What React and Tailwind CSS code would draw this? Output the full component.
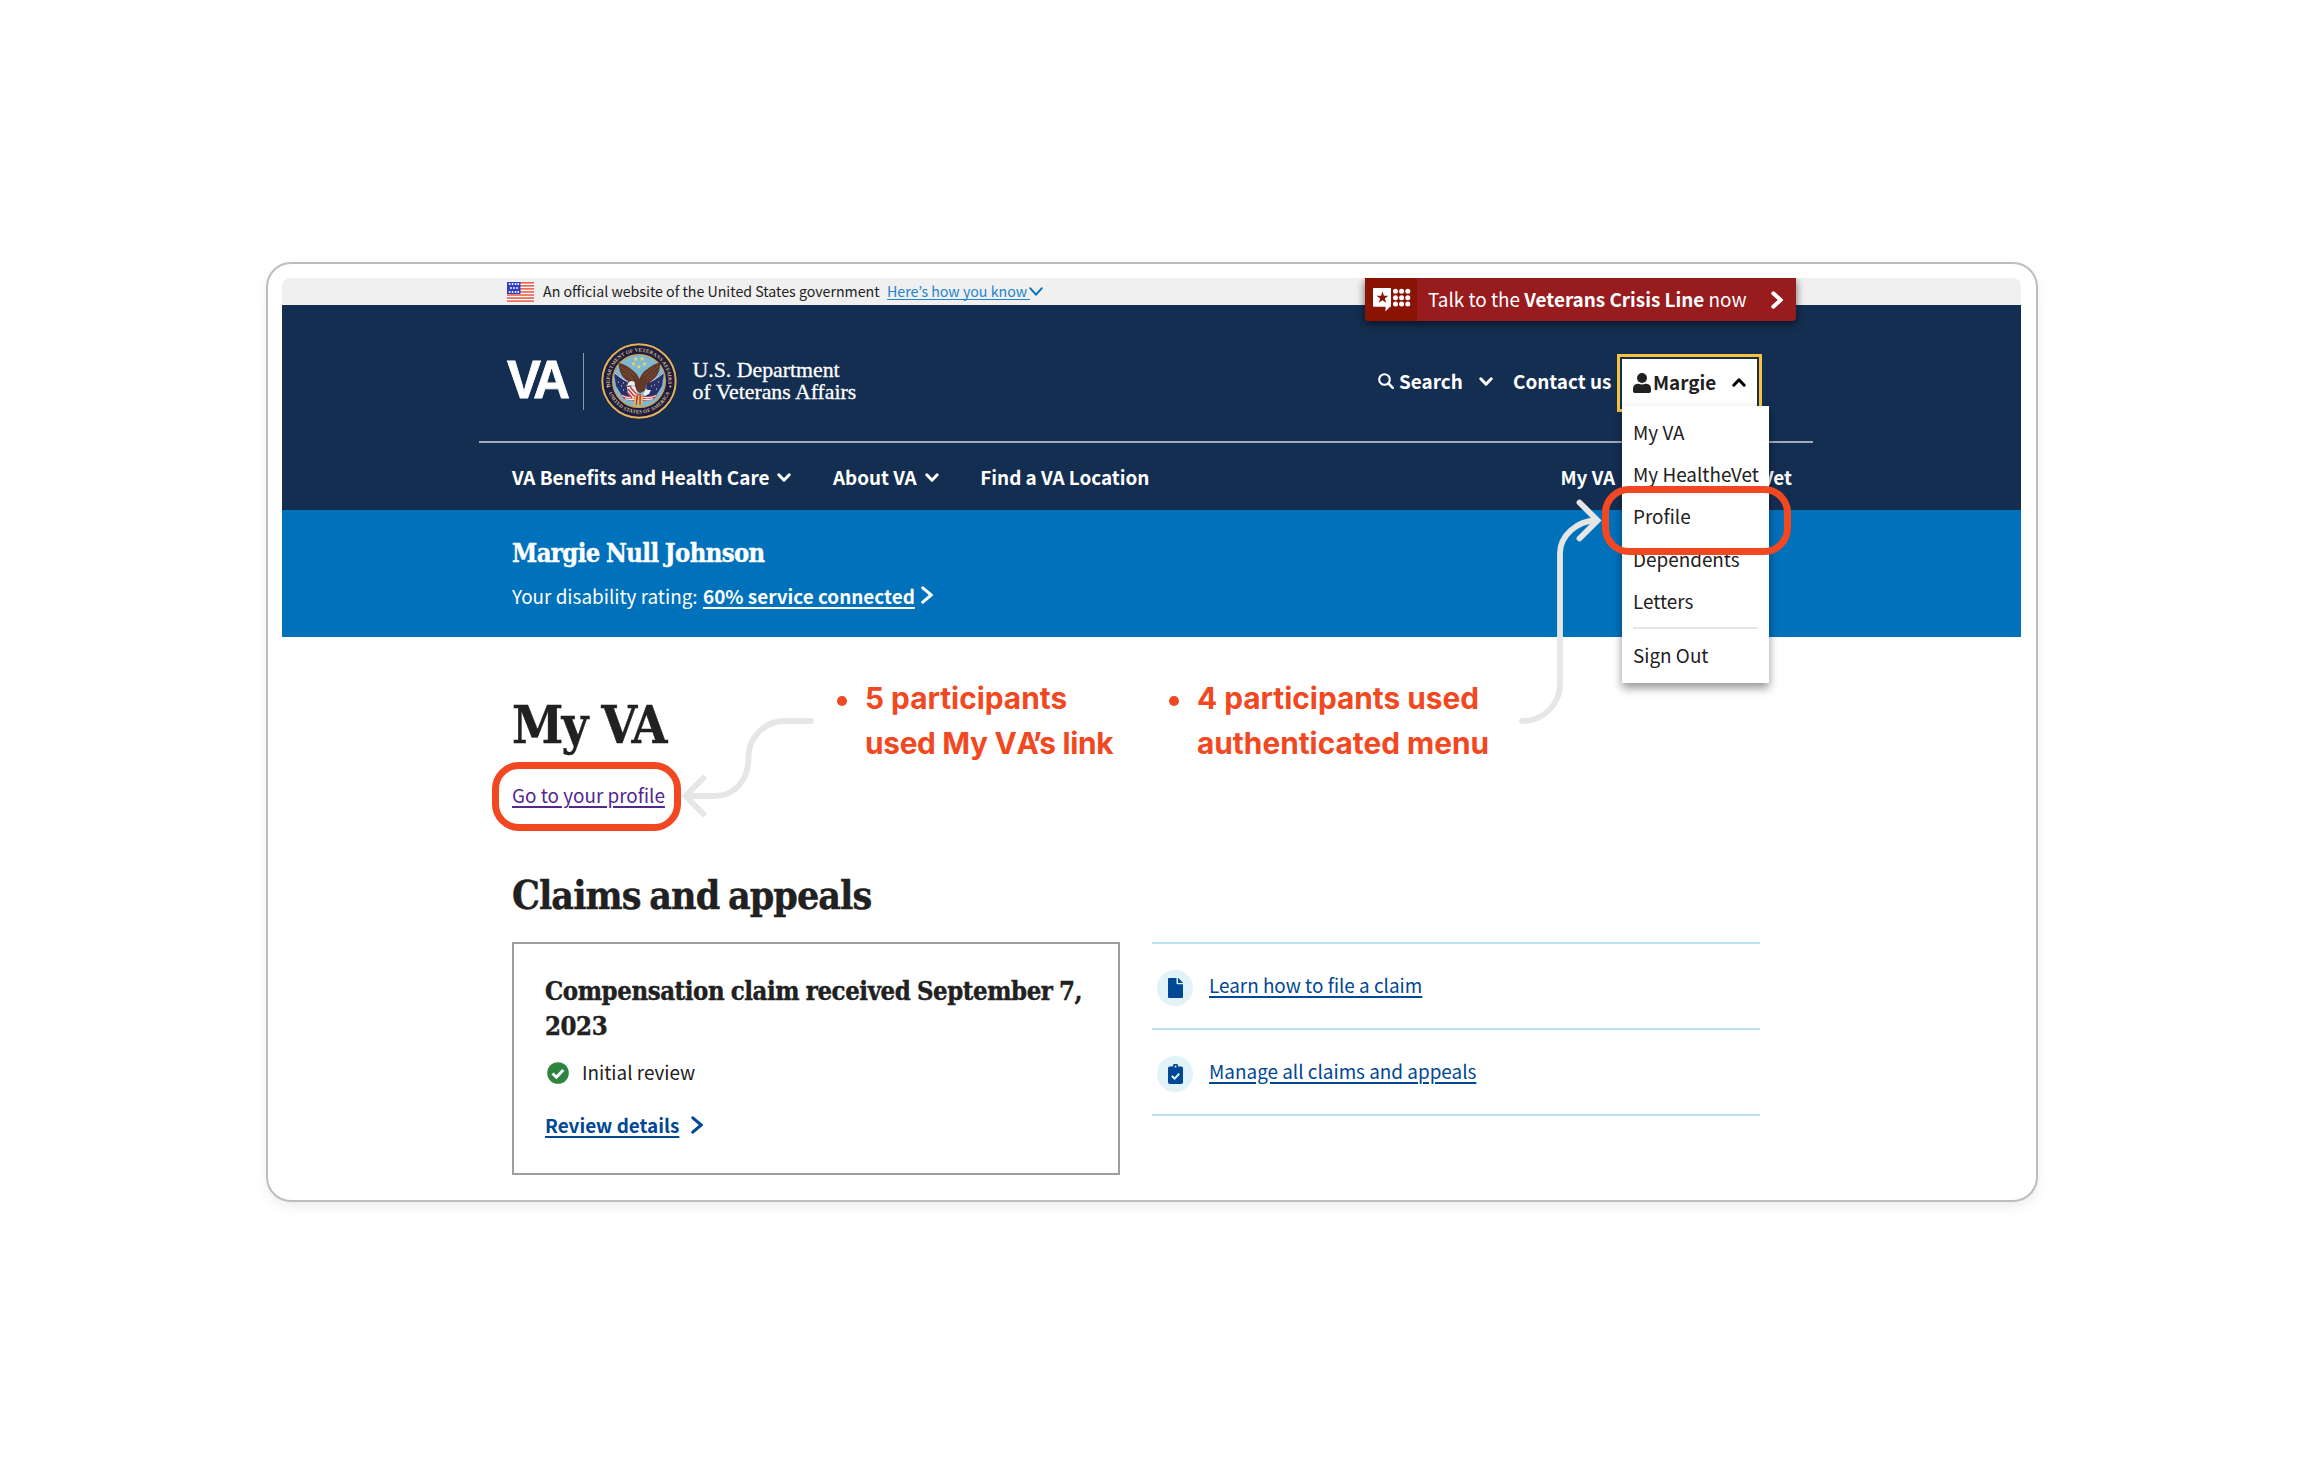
import React from "react";

function Chevron({ dir = "down", className = "", w = 14, h = 9, stroke = 3 }) {
  const vertical = dir === "down" || dir === "up";
  const i = stroke / 2 + 0.3;
  const d =
    dir === "down"
      ? `M${i} ${i} L${w / 2} ${h - i} L${w - i} ${i}`
      : dir === "up"
      ? `M${i} ${h - i} L${w / 2} ${i} L${w - i} ${h - i}`
      : `M${i} ${i} L${w - i} ${h / 2} L${i} ${h - i}`;
  return (
    <svg width={w} height={h} viewBox={`0 0 ${w} ${h}`} className={`shrink-0 ${className}`} fill="none" stroke="currentColor" strokeWidth={stroke} strokeLinecap="round" strokeLinejoin={vertical ? "round" : "miter"}>
      <path d={d} />
    </svg>
  );
}

function Flag() {
  return (
    <svg width="27" height="20" viewBox="0 0 27 20" className="shrink-0">
      <rect width="27" height="20" fill="#fff" />
      {[0, 1, 2, 3, 4, 5, 6].map((i) => (
        <rect key={i} x="0" y={i * 3.05} width="27" height="1.6" fill="#e8604c" />
      ))}
      <rect width="13.5" height="12" fill="#2f3fc4" />
      {[2, 6, 10].map((y, r) =>
        [2.6, 5.6, 8.6, 11.2].slice(0, r === 1 ? 3 : 4).map((x) => (
          <circle key={`${x}-${y}`} cx={r === 1 ? x + 1.4 : x} cy={y} r="0.95" fill="#fff" />
        ))
      )}
    </svg>
  );
}

function Seal() {
  return (
    <svg width="78" height="78" viewBox="-39 -39 78 78" className="shrink-0">
      <defs>
        <path id="sealTop" d="M-28.3 7 A29.2 29.2 0 1 1 28.3 7" />
        <path id="sealBottom" d="M-32.2 5 A32.6 32.6 0 0 0 32.2 5" />
        <clipPath id="sky"><circle r="25.6" /></clipPath>
      </defs>
      <circle r="38.4" fill="#1f1c3f" />
      <circle r="36.7" fill="none" stroke="#dcb45c" strokeWidth="2" />
      <circle r="26.4" fill="#7fb6d0" stroke="#c9a455" strokeWidth="1.3" />
      <text fill="#cdb988" fontSize="5.2" fontWeight="700" fontFamily="Liberation Serif, serif">
        <textPath href="#sealTop" startOffset="1" textLength="101">DEPARTMENT OF VETERANS AFFAIRS</textPath>
      </text>
      <text fill="#cdb988" fontSize="5.2" fontWeight="700" fontFamily="Liberation Serif, serif">
        <textPath href="#sealBottom" startOffset="7" textLength="78">UNITED STATES OF AMERICA</textPath>
      </text>
      <circle cx="-31.3" cy="5.5" r="1" fill="#e6cf92" />
      <circle cx="31.3" cy="5.5" r="1" fill="#e6cf92" />
      <g clipPath="url(#sky)">
        <path d="M-25 -8 L-22 -7 Q-16 -1 -8 1 L-6 17 Q-14 17 -18 13 L-23 5Z" fill="#2a3068" />
        <path d="M25 -8 L22 -7 Q16 -1 8 1 L6 17 Q14 17 18 13 L23 5Z" fill="#2a3068" />
        <path d="M-24.5 -8 Q-17 -2 -11 1M24.5 -8 Q17 -2 11 1" stroke="#e8eef5" strokeWidth="1" fill="none" />
        <path d="M-21 1h1M-18 5h1M-16 2h1M-16 9h1M19 1h1M15 4h1M17 8h1M12 5h1" stroke="#dfe6f2" strokeWidth="1.1" />
        <path d="M-19 13 Q-10 18 0 13 Q10 18 19 13 L15 18 Q8 21 0 19 Q-8 21 -15 18Z" fill="#c23b43" />
        <path d="M-17 14.5 Q-9 18 -3 16M17 14.5 Q9 18 3 16M-14 17.5 Q-8 19.5 -3 18M14 17.5 Q8 19.5 3 18" stroke="#f0e6e2" strokeWidth="1.3" fill="none" />
      </g>
      <g fill="#f3da58">
        {[[-3.2, -22], [3, -22], [-5.4, -17], [5.4, -17], [0, -14.2]].map(([x, y]) => (
          <path key={`${x}${y}`} transform={`translate(${x} ${y})`} d="M0-2.4 .6-.8 2.3-.8 .9.3 1.5 2 0 1-1.5 2-.9.3-2.3-.8-.6-.8Z" />
        ))}
      </g>
      <path d="M-20.5 -18 Q-14 -17 -8 -12 Q-2 -8 0.5 -2 Q3 -9 9 -12.5 Q15 -17 21 -19 Q21.5 -12 18.5 -6.5 Q15 -1 8 3 Q6.5 7 5.5 10 L1 12 L-3.5 9 L-5 2 Q-12 1 -16 -4 Q-20 -9 -20.5 -18Z" fill="#63392a" />
      <path d="M-18 -14 L-6 -3 M-16 -8 L-6 -1 M-13 -13 L-3 -4 M19 -15 L7 -2 M17 -8 L8 0 M14 -14 L5 -5" stroke="#7d4f36" strokeWidth="1" />
      <path d="M-11 2 Q-8 -1.5 -4.5 1 L-4 4.5 L-9 4.5 L-11.5 5Z" fill="#f2efe9" />
      <path d="M-11.5 3 l-2 2.5 2.5 -.6z" fill="#e9b93b" />
      <path d="M-12 6 L-4 5 L-1 14 L-6 18 L-11 13Z" fill="#f3ecea" />
      <path d="M-11 8 L-4 16 M-9 6 L-2.5 13 M-11 12 L-7 17" stroke="#c23b43" strokeWidth="1.5" />
      <path d="M4 13 L7 8 L9 9 L12 9 L10 13 L6 15Z" fill="#eef1f4" />
      <path d="M-3 14 L-4.5 25 M0 14 L-1 26 M2.5 13.5 L2.5 24" stroke="#dfb950" strokeWidth="2" />
      <path d="M-1.8 13 L-2.8 24 M1.2 13 L1 24" stroke="#b8323a" strokeWidth="1.1" />
    </svg>
  );
}

function CrisisIcon() {
  return (
    <svg width="38" height="24" viewBox="0 0 38 24" className="shrink-0">
      <path d="M.8 0H18V18.8H17L12.5 23.5V18.8H.8Q0 18.8 0 18V.8Q0 0 .8 0Z" fill="#fff" />
      <path d="M9.5 3.5 10.95 7.8 15.4 7.85 11.85 10.55 13.15 14.8 9.5 12.25 5.85 14.8 7.15 10.55 3.6 7.85 8.05 7.8Z" fill="#8b1303" />
      {[3.3, 9.7, 16].map((y) => [22.5, 28.6, 34.8].map((x) => <circle key={`${x}-${y}`} cx={x} cy={y} r="2.5" fill="#fff" />))}
    </svg>
  );
}

function SearchIcon() {
  return (
    <svg width="16" height="16" viewBox="0 0 16 16" className="shrink-0" fill="none" stroke="currentColor">
      <circle cx="6.5" cy="6.5" r="5.3" strokeWidth="2.1" />
      <path d="M10.5 10.5 14.8 14.8" strokeWidth="2.5" strokeLinecap="round" />
    </svg>
  );
}

function UserIcon() {
  return (
    <svg width="18" height="20" viewBox="0 0 18 20" className="shrink-0" fill="#212121">
      <circle cx="9" cy="5" r="5" />
      <path d="M4.8 10.8H5.5Q9 12.4 12.5 10.8H13.2Q18 11 18 16V18.2Q18 20 16.2 20H1.8Q0 20 0 18.2V16Q0 11 4.8 10.8Z" />
    </svg>
  );
}

function FileIcon() {
  return (
    <svg width="15" height="20" viewBox="0 0 15 20" fill="#004795">
      <path d="M1 0H8.5V5.3Q8.5 6.3 9.5 6.3H15V19Q15 20 14 20H1Q0 20 0 19V1Q0 0 1 0Z" />
      <path d="M10 0H10.3L15 4.8V5H10Z" />
    </svg>
  );
}

function ClipboardIcon() {
  return (
    <svg width="15" height="20" viewBox="0 0 15 20">
      <path d="M1.8 2.5H4.7A2.8 2.8 0 0 1 10.3 2.5H13.2Q15 2.5 15 4.3V18.2Q15 20 13.2 20H1.8Q0 20 0 18.2V4.3Q0 2.5 1.8 2.5Z" fill="#004795" />
      <circle cx="7.5" cy="2.6" r="1" fill="#e1f3f8" />
      <path d="M3.8 12 6.6 14.6 11.2 9.8" stroke="#e1f3f8" strokeWidth="2" fill="none" />
    </svg>
  );
}

const menuItems = ["My VA", "My HealtheVet", "Profile", "Dependents", "Letters"];

function UserMenu() {
  return (
    <div className="relative mt-[3px] h-[48px] w-[135px]">
      <button className="flex h-full w-full items-center bg-white pl-[11px] text-[#212121] outline-[3px] outline-offset-[2px] outline-[#fac23b]">
        <UserIcon />
        <span className="ml-[2px] w-[64px] pb-[2px] text-left leading-[30px]">Margie</span>
        <Chevron dir="up" className="ml-[15px] text-black" />
      </button>
      <ul className="absolute top-[47px] left-0 z-10 h-[277px] w-[147px] bg-white px-[11px] pt-[5.3px] font-normal whitespace-nowrap text-[#212121] shadow-[0_5px_9px_rgba(0,0,0,0.42)]">
        {menuItems.map((m) => (
          <li key={m} className="h-[42.3px] leading-[42.3px]">{m}</li>
        ))}
        <li className="mt-[5px] border-t-2 border-[#e6e6e6] pt-[5px] leading-[42px]">Sign Out</li>
      </ul>
    </div>
  );
}

function CrisisLine() {
  return (
    <div className="absolute top-0 left-[1083px] flex h-[43px] w-[431px] items-center overflow-visible rounded-b-[4px] bg-[#981b1e] text-white shadow-[0_3px_8px_rgba(0,0,0,0.6)] [clip-path:inset(0_-20px_-20px_-20px)]">
      <div className="flex h-full w-[52px] items-center rounded-bl-[4px] bg-[#8b1303] pt-px pl-[8px]">
        <CrisisIcon />
      </div>
      <div className="ml-[11px] w-[321px] pb-[1px] whitespace-nowrap">
        Talk to the <b className="font-bold">Veterans Crisis Line</b> now
      </div>
      <Chevron dir="right" w={12} h={18} stroke={4} className="ml-[22px]" />
    </div>
  );
}

function Header() {
  return (
    <header className="h-[205px] bg-[#142e51] text-white">
      <div className="ml-[197px] w-[1334px]">
        <div className="flex h-[138px] items-center border-b-2 border-[#a3abb8] pt-[16px] pl-[28px] font-bold">
          <span className="w-[64px] origin-left scale-x-[0.96] pb-[2px] font-['Liberation_Sans',sans-serif] text-[53px] leading-[60px] tracking-[-4px] [-webkit-text-stroke:0.8px_white]">VA</span>
          <span className="ml-[12px] h-[57px] w-px bg-[#8d99aa]" />
          <span className="ml-[16px]"><Seal /></span>
          <div className="ml-[14.5px] font-['Liberation_Serif',serif] text-[21.8px] leading-[22px] font-normal [-webkit-text-stroke:0.3px_white]">
            <div>U.S. Department</div>
            <div>of Veterans Affairs</div>
          </div>
          <div className="mr-[56px] ml-auto flex items-center leading-[30px]">
            <SearchIcon />
            <span className="ml-[5px] w-[63px]">Search</span>
            <Chevron className="ml-[17px]" />
            <span className="mr-[11px] ml-[20px] w-[98px] whitespace-nowrap">Contact us</span>
            <UserMenu />
          </div>
        </div>
        <nav className="flex h-[67px] items-center pt-px pr-[21px] pl-[33px] font-bold whitespace-nowrap">
          <span>VA Benefits and Health Care</span>
          <Chevron className="ml-[8px]" />
          <span className="ml-[41.5px]">About VA</span>
          <Chevron className="ml-[8px]" />
          <span className="ml-[41.5px]">Find a VA Location</span>
          <span className="mr-[43px] ml-auto">My VA</span>
          <span>My HealtheVet</span>
        </nav>
      </div>
    </header>
  );
}

const serif = "font-['DejaVu_Serif_Condensed','DejaVu_Serif',serif] [-webkit-text-stroke:0.4px_currentColor]";

function Annotations() {
  return (
    <>
      <div className="absolute top-[762px] left-[492px] h-[68.5px] w-[189px] rounded-[27px] border-[7.5px] border-[#f24822]" />
      <div className="absolute top-[486px] left-[1602px] z-20 h-[68.5px] w-[189px] rounded-[27px] border-[7.5px] border-[#f24822]" />
      <svg className="absolute top-[700px] left-[676px]" width="150" height="130" viewBox="676 700 150 130" fill="none" stroke="#e6e6e6" strokeWidth="5.8" strokeLinecap="round">
        <path d="M811 721H785C764 721 748.5 738 748.5 757C748.5 779 736 796 714 796H687" />
        <path d="M703.5 778 685.5 796 703.5 814" />
      </svg>
      <svg className="absolute top-[490px] left-[1510px] z-10" width="100" height="240" viewBox="1510 490 100 240" fill="none" stroke="#e6e6e6" strokeWidth="5.8" strokeLinecap="round">
        <path d="M1522 721C1544 721 1560 704 1560 684V553C1560 536 1577 520.5 1596 520.5" />
        <path d="M1579.5 502.5 1597.5 520.5 1579.5 538.5" />
      </svg>
      <div className="absolute top-[676px] left-[837px] flex gap-[86px] font-['Inter',sans-serif] text-[29.8px] leading-[45px] font-bold whitespace-nowrap text-[#f24822]">
        <div className="flex w-[246px]">
          <span className="mt-[20px] mr-[18px] size-[10px] shrink-0 rounded-full bg-[#f24822]" />
          <div>
            5 participants<br />
            <span className="tracking-[-0.3px]">used My V<span className="tracking-[-2.8px]">A’</span>s link</span>
          </div>
        </div>
        <div className="flex">
          <span className="mt-[20px] mr-[18px] size-[10px] shrink-0 rounded-full bg-[#f24822]" />
          <div>4 participants used<br />authenticated menu</div>
        </div>
      </div>
    </>
  );
}

const links = [
  { label: "Learn how to file a claim", icon: <FileIcon /> },
  { label: "Manage all claims and appeals", icon: <ClipboardIcon /> },
];

export default function App() {
  return (
    <div className="relative h-[1472px] w-[2305px] overflow-hidden bg-white pt-[262px] pl-[266px] font-['Noto_Sans_CJK_JP',sans-serif] text-[18.9px] leading-[30px] text-[#212121]">
      <div className="h-[940px] w-[1772px] rounded-[25px] border-2 border-[#bdbdbd] px-[14px] pt-[14px] shadow-[0_5px_12px_rgba(0,0,0,0.07)]">
        <div className="relative w-[1739px]">
          <div className="flex h-[27px] items-center rounded-t-[8px] bg-[#f0f0f0] pl-[225px] text-[14.2px] leading-[20px]">
            <Flag />
            <span className="ml-[9px] w-[344px] pb-px whitespace-nowrap">An official website of the United States government</span>
            <a className="border-b border-[#2284cb] leading-[16px] whitespace-nowrap text-[#2284cb]">Here’s how you know&nbsp;</a>
            <Chevron w={14} h={9} stroke={2} className="-ml-px text-[#0071bb]" />
          </div>
          <Header />
          <CrisisLine />
          <section className="h-[127px] bg-[#0071bb] pt-[28px] pl-[230px] text-white">
            <h2 className={`${serif} text-[25.3px] leading-[30px] font-bold tracking-[-0.55px] [word-spacing:-1px]`}>Margie Null Johnson</h2>
            <p className="mt-[12.5px] flex items-center">
              Your disability rating:
              <a className="ml-[5.5px] font-bold underline decoration-2 underline-offset-[3px]">60% service connected</a>
              <Chevron dir="right" w={12} h={18} stroke={3} className="mb-px ml-[6px]" />
            </p>
          </section>
          <main className="pt-[57.5px] pl-[230px]">
            <h1 className={`${serif} text-[51.5px] leading-[60px] font-bold tracking-[-1.7px] [word-spacing:0px]`}>My VA</h1>
            <p className="mt-[25.5px]">
              <a className="text-[#54278f] underline decoration-[1.5px] underline-offset-[3px]">Go to your profile</a>
            </p>
            <h2 className={`${serif} mt-[60px] text-[39px] leading-[50px] font-bold tracking-[-0.95px] [word-spacing:-2.5px]`}>Claims and appeals</h2>
            <div className="mt-[22px] flex gap-[32px]">
              <article className="h-[233px] w-[608px] border-2 border-[#9c9ea0] pt-[30px] pl-[31px]">
                <h3 className={`${serif} text-[25.5px] leading-[34.5px] font-bold tracking-[-0.42px] whitespace-nowrap [word-spacing:-1px]`}>
                  Compensation claim received September 7,<br />2023
                </h3>
                <p className="mt-[13.5px] flex items-center pl-[2px]">
                  <svg width="22" height="22" viewBox="0 0 22 22" className="mt-[2px]">
                    <circle cx="11" cy="11" r="10.8" fill="#2e8540" />
                    <path d="M5.5 11.5 9.4 15.2 16.3 8" stroke="#fff" strokeWidth="2.9" fill="none" />
                  </svg>
                  <span className="ml-[13px]">Initial review</span>
                </p>
                <p className="mt-[23px] flex items-center text-[#004795]">
                  <a className="font-bold underline decoration-2 underline-offset-[3px]">Review details</a>
                  <Chevron dir="right" w={12} h={18} stroke={3} className="ml-[12px]" />
                </p>
              </article>
              <ul className="w-[608px] border-t-2 border-[#b8e4f3]">
                {links.map((l) => (
                  <li key={l.label} className="flex h-[86px] items-center border-b-2 border-[#b8e4f3] pl-[5px]">
                    <span className="mt-[4px] flex size-[36px] items-center justify-center rounded-full bg-[#e1f3f8]">{l.icon}</span>
                    <a className="mb-[3px] ml-[16px] text-[#004795] underline decoration-[1.5px] underline-offset-[3px]">{l.label}</a>
                  </li>
                ))}
              </ul>
            </div>
          </main>
        </div>
      </div>
      <Annotations />
    </div>
  );
}
